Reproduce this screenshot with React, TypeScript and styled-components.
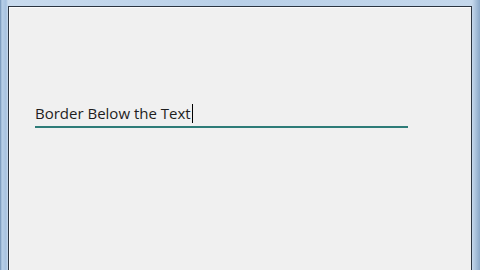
import React from "react";
import styled, { createGlobalStyle } from "styled-components";

const Global = createGlobalStyle`
  html, body { margin: 0; padding: 0; width: 480px; height: 270px; overflow: hidden; }
  body { background: #a9c3de; }
`;

const Frame = styled.div`
  width: 480px;
  height: 270px;
  box-sizing: border-box;
  padding: 6px 8px 0 8px;
  background: linear-gradient(90deg, #6d8fb4 0px, #b7cfe8 2px, #a7c2e0 6px, #c9dbee 8px, #b9d0e8 240px, #c5d8ec 472px, #8aa8c8 480px);
`;

const Client = styled.div`
  height: 100%;
  box-sizing: border-box;
  border: 1px solid #2b3440;
  border-bottom: none;
  background: #f0f0f0;
  padding: 95px 0 0 26px;
  box-shadow: inset 1px 1px 0 #fbfbfb;
`;

const Field = styled.div`
  width: 373px;
  height: 21px;
  border-bottom: 2px solid #2e7c78;
  display: flex;
  align-items: flex-end;
  padding-bottom: 3px;
`;

const Text = styled.span`
  font-family: "Open Sans", "Liberation Sans", sans-serif;
  font-size: 15px;
  line-height: 19px;
  color: #1e1e1e;
`;

const Caret = styled.span`
  display: inline-block;
  width: 1px;
  height: 19px;
  background: #000;
  margin-left: 1px;
  vertical-align: bottom;
`;

export default function App() {
  return (
    <>
      <Global />
      <Frame>
        <Client>
          <Field>
            <Text>Border Below the Text<Caret /></Text>
          </Field>
        </Client>
      </Frame>
    </>
  );
}
